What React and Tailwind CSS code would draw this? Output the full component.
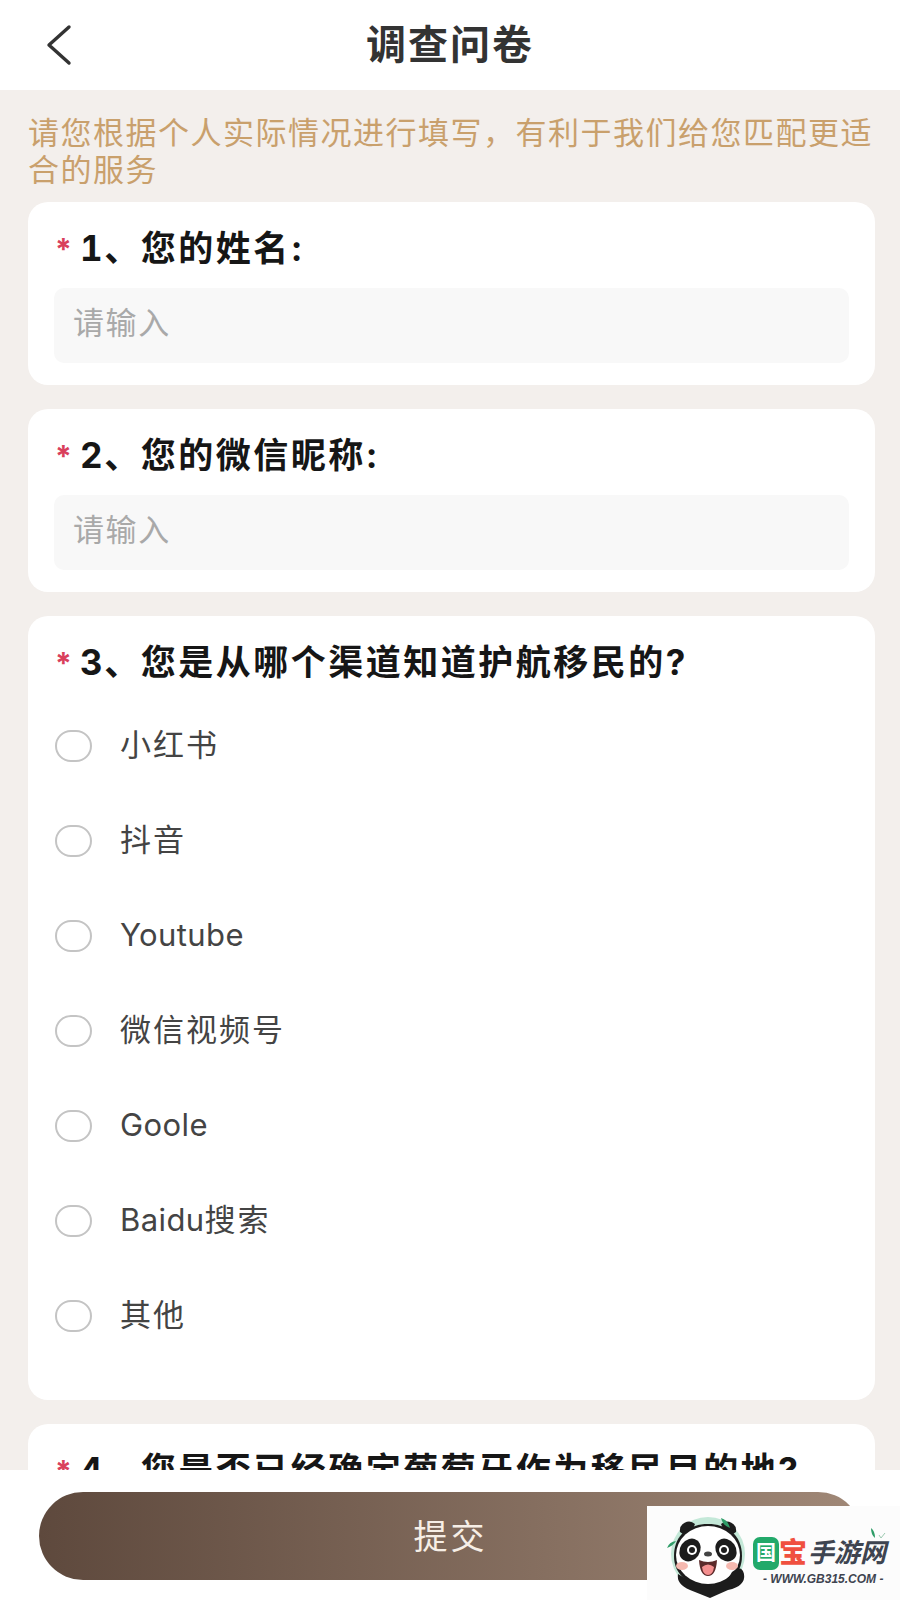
const cjk = { fontFamily: '"Inter", "Noto Sans CJK SC", sans-serif' };

const channels = [
  { latin: "", text: "小红书" },
  { latin: "", text: "抖音" },
  { latin: "Youtube", text: "" },
  { latin: "", text: "微信视频号" },
  { latin: "Goole", text: "" },
  { latin: "Baidu", text: "搜索" },
  { latin: "", text: "其他" },
];

const Question = ({ num, children }) => (
  <div className="flex items-center h-[40px]">
    <span className="w-[26px] text-[30px] leading-[40px] text-[#d9405c] pt-[2px] pl-px font-bold">*</span>
    <span className="text-[35px] leading-[40px] font-bold text-[#161616] whitespace-nowrap">
      <span className="tabular-nums tracking-[1.5px]">{num}、</span>
      <span className="tracking-[2.5px]">{children}</span>
    </span>
  </div>
);

const TextField = () => (
  <div className="mt-[20px] h-[75px] rounded-[10px] bg-[#f8f8f8] flex items-center pl-[19px] pb-[5px] text-[31px] tracking-[1.6px] text-[#a9a9a9]">
    请输入
  </div>
);

const Panda = () => (
  <svg width="84" height="84" viewBox="0 0 84 84" className="shrink-0">
    <circle cx="42" cy="40" r="37" fill="#c4e8d8" />
    <path d="M14 18 a9 9 0 0 1 15 -8 l-6 14z" fill="#1c1c1c" />
    <path d="M70 18 a9 9 0 0 0 -15 -8 l6 14z" fill="#1c1c1c" />
    <path d="M8 42 C8 20 24 10 42 10 C60 10 76 20 76 42 C76 62 60 72 42 72 C24 72 8 62 8 42z" fill="#1c1c1c" />
    <ellipse cx="42" cy="41" rx="32" ry="29" fill="#fff" />
    <ellipse cx="24" cy="36" rx="10" ry="12" transform="rotate(35 24 36)" fill="#1c1c1c" />
    <ellipse cx="60" cy="36" rx="10" ry="12" transform="rotate(-35 60 36)" fill="#1c1c1c" />
    <circle cx="26" cy="36" r="5" fill="#fff" />
    <circle cx="58" cy="36" r="5" fill="#fff" />
    <circle cx="26" cy="36" r="3" fill="#1c1c1c" />
    <circle cx="58" cy="36" r="3" fill="#1c1c1c" />
    <ellipse cx="42" cy="40" rx="4" ry="2.5" fill="#444" />
    <path d="M33 46 Q42 50 51 46 Q50 62 42 62 Q34 62 33 46z" fill="#5b2a2a" />
    <path d="M36 53 Q42 48 48 53 Q47 61 42 61 Q37 61 36 53z" fill="#f58f8f" />
    <ellipse cx="16" cy="52" rx="6" ry="4" fill="#f6b9b0" />
    <ellipse cx="66" cy="52" rx="6" ry="4" fill="#f6b9b0" />
    <path d="M12 60 Q24 68 42 72 Q60 70 66 58 Q76 50 78 60 Q80 72 62 76 L44 84 L24 76 Q10 70 12 60z" fill="#1c1c1c" />
    <path d="M55 4 Q62 6 64 14 Q57 12 55 4z" fill="#2f9d68" />
    <path d="M1 34 Q7 32 10 27 Q3 28 1 34z" fill="#2f9d68" />
  </svg>
);

const Watermark = () => (
  <div className="absolute right-0 bottom-0 w-[253px] h-[94px] bg-[#fcfcfc] flex items-start pl-[19px] pt-[8px]">
    <Panda />
    <div className="ml-[3px] pt-[21px] flex flex-col items-start">
      <div className="flex items-center h-[36px] leading-none" style={cjk}>
        <span className="w-[26px] h-[33px] rounded-[7px] bg-[#22a96a] text-white text-[20px] font-bold flex items-center justify-center">国</span>
        <span className="w-[28px] text-[28px] font-black text-[#f0503f] text-center">宝</span>
        <span className="ml-[1px] text-[26px] font-bold italic text-[#3e4450] whitespace-nowrap">手游网</span>
      </div>
      <div className="mt-[1px] ml-[10px] text-[12px] leading-[14px] font-bold italic text-[#3e4450] whitespace-nowrap" style={{ fontFamily: '"Liberation Sans", sans-serif' }}>
        - WWW.GB315.COM -
      </div>
    </div>
    <svg width="16" height="12" viewBox="0 0 16 12" className="absolute left-[223px] top-[21px]">
      <path d="M1 1 Q5 4 5 11 Q1 8 1 1z" fill="#2f9d68" />
      <path d="M9 8 L11 11 L15 6" fill="none" stroke="#9cc9b0" strokeWidth="1" />
    </svg>
  </div>
);

export default function App() {
  return (
    <div className="relative h-[1600px] w-[900px] overflow-hidden flex flex-col bg-white" style={cjk}>
      <header className="h-[90px] shrink-0 bg-white relative flex items-center justify-center">
        <svg width="30" height="42" viewBox="0 0 30 42" className="absolute left-[44px] top-[24px]" fill="none" stroke="#333" strokeWidth="3.4" strokeLinecap="round" strokeLinejoin="round">
          <path d="M25 3 L5 21 L25 39" />
        </svg>
        <h1 className="text-[40px] font-bold text-[#333] tracking-[2px]">调查问卷</h1>
      </header>

      <main className="flex-1 min-h-0 overflow-hidden bg-[#f3efec] pl-[28px] pr-[25px]">
        <p className="pt-[24px] -mr-[8px] text-[31px] leading-[37px] tracking-[1.5px] text-[#c9a06c]">
          请您根据个人实际情况进行填写，有利于我们给您匹配更适合的服务
        </p>

        <section className="mt-[14px] rounded-[20px] bg-white pt-[26px] pb-[22px] px-[26px]">
          <Question num="1">您的姓名:</Question>
          <TextField />
        </section>

        <section className="mt-[24px] rounded-[20px] bg-white pt-[26px] pb-[22px] px-[26px]">
          <Question num="2">您的微信昵称:</Question>
          <TextField />
        </section>

        <section className="mt-[24px] rounded-[20px] bg-white pt-[26px] pb-[37px] px-[26px]">
          <Question num="3">您是从哪个渠道知道护航移民的?</Question>
          <ul className="mt-[16px]">
            {channels.map((item) => (
              <li key={item.latin + item.text} className="h-[95px] flex items-center pl-px">
                <span className="w-[37px] h-[32px] rounded-full border-2 border-[#c4c4c4] shrink-0" />
                <span className="ml-[28px] text-[31px] text-[#444]">
                  <span className="tracking-[0.4px]">{item.latin}</span>
                  <span className="tracking-[2px]">{item.text}</span>
                </span>
              </li>
            ))}
          </ul>
        </section>

        <section className="mt-[24px] rounded-[20px] bg-white pt-[26px] pb-[22px] px-[26px]">
          <Question num="4">您是否已经确定葡萄牙作为移民目的地?</Question>
        </section>
      </main>

      <footer className="h-[130px] shrink-0 bg-white px-[39px] pt-[22px]">
        <button className="w-[823px] h-[88px] rounded-full bg-gradient-to-r from-[#5e493d] to-[#a08877] text-[#f6eee6] text-[34px] tracking-[3px]">
          提交
        </button>
      </footer>

      <Watermark />
    </div>
  );
}
